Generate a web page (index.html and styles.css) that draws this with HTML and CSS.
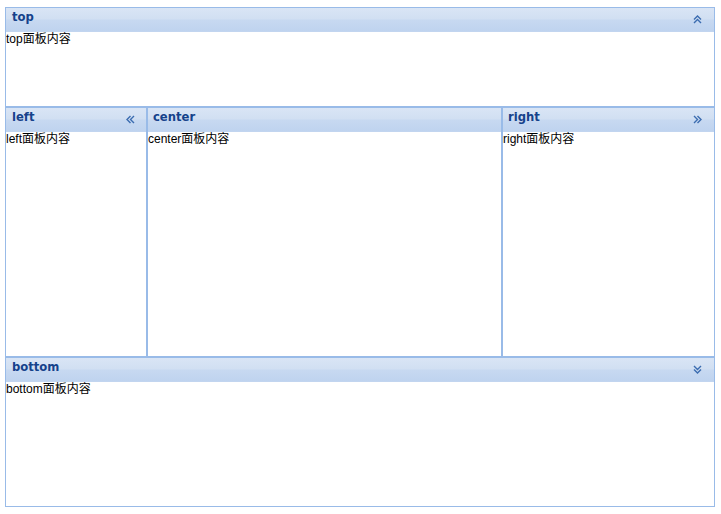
FILE: index.html
```html
<!DOCTYPE html>
<html>
<head>
<meta charset="utf-8">
<link rel="stylesheet" href="styles.css">
</head>
<body>
<div class="viewport">
  <section class="panel top">
    <div class="hd"><span class="title">top</span>
      <svg class="tool" width="9" height="9" viewBox="0 0 9 9"><path d="M1 4.5 L4.5 1 L8 4.5 M1 8 L4.5 4.5 L8 8" fill="none" stroke="#3b6cb0" stroke-width="1.4"/></svg>
    </div>
    <div class="bd">top面板内容</div>
  </section>
  <div class="middle">
    <section class="panel left">
      <div class="hd"><span class="title">left</span>
        <svg class="tool" width="9" height="9" viewBox="0 0 9 9"><path d="M4.5 1 L1 4.5 L4.5 8 M8 1 L4.5 4.5 L8 8" fill="none" stroke="#3b6cb0" stroke-width="1.4"/></svg>
      </div>
      <div class="bd">left面板内容</div>
    </section>
    <section class="panel center">
      <div class="hd"><span class="title">center</span></div>
      <div class="bd">center面板内容</div>
    </section>
    <section class="panel right">
      <div class="hd"><span class="title">right</span>
        <svg class="tool" width="9" height="9" viewBox="0 0 9 9"><path d="M1 1 L4.5 4.5 L1 8 M4.5 1 L8 4.5 L4.5 8" fill="none" stroke="#3b6cb0" stroke-width="1.4"/></svg>
      </div>
      <div class="bd">right面板内容</div>
    </section>
  </div>
  <section class="panel bottom">
    <div class="hd"><span class="title">bottom</span>
      <svg class="tool" width="9" height="9" viewBox="0 0 9 9"><path d="M1 1 L4.5 4.5 L8 1 M1 4.5 L4.5 8 L8 4.5" fill="none" stroke="#3b6cb0" stroke-width="1.4"/></svg>
    </div>
    <div class="bd">bottom面板内容</div>
  </section>
</div>
</body>
</html>
```
FILE: styles.css
```css
html, body { margin: 0; padding: 0; background: #fff; }
body { padding: 7px 0 0 5px; }
.viewport {
  width: 710px;
  height: 500px;
  display: grid;
  grid-template-rows: 100px 250px 150px;
}
.middle {
  display: grid;
  grid-template-columns: 142px 355px 213px;
}
.panel {
  border: 1px solid #99bbe8;
  display: flex;
  flex-direction: column;
  min-height: 0;
  overflow: hidden;
}
.hd {
  height: 24px;
  flex: none;
  display: flex;
  align-items: center;
  justify-content: space-between;
  padding: 0 12px 0 6px;
  background: linear-gradient(to bottom, #d9e5f5 0, #d1dff2 11px, #c7d9f1 12px, #bfd3ef 23px, #c5d7f0 24px);
}
.title {
  font-family: "DejaVu Sans", Verdana, sans-serif;
  font-weight: bold;
  font-size: 11.6px;
  color: #15428b;
  position: relative;
  top: -3px;
}
.center .hd, .right .hd { padding-left: 5px; }
.tool { position: relative; top: -1px; }
.left .hd { padding-right: 11px; }
.bd {
  flex: 1;
  font-family: "Liberation Sans", Arial, "Noto Sans CJK SC", sans-serif;
  font-size: 12px;
  line-height: 15px;
  color: #000;
}
```
